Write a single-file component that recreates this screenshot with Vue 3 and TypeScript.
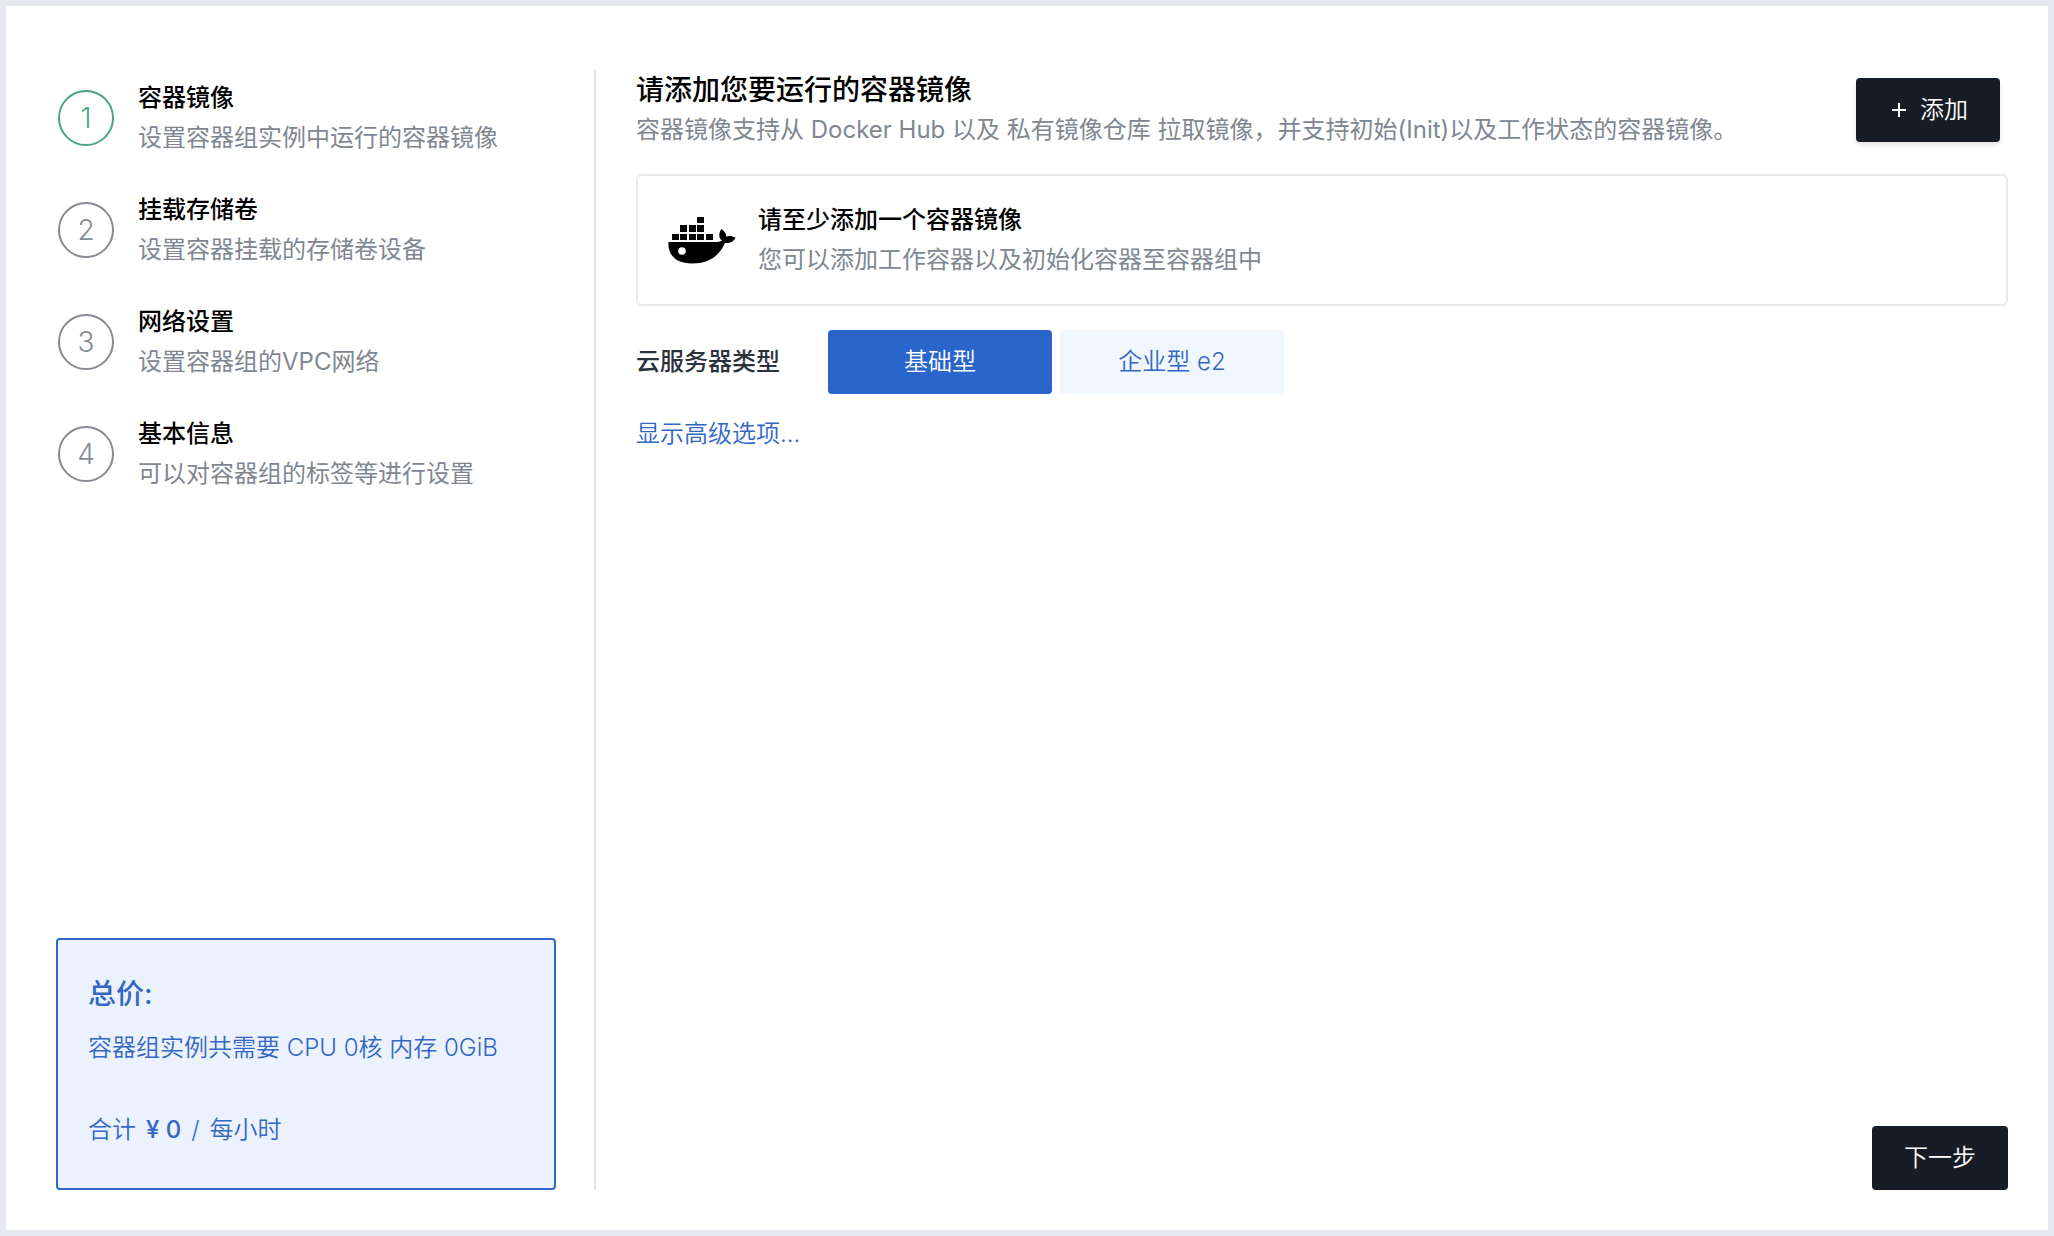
<script setup lang="ts">
import { ref } from 'vue'

interface Step {
  title: string
  desc: string
}

interface ServerType {
  value: string
  label: string
}

const steps: Step[] = [
  { title: '容器镜像', desc: '设置容器组实例中运行的容器镜像' },
  { title: '挂载存储卷', desc: '设置容器挂载的存储卷设备' },
  { title: '网络设置', desc: '设置容器组的VPC网络' },
  { title: '基本信息', desc: '可以对容器组的标签等进行设置' },
]
const current = ref(0)

const serverTypes: ServerType[] = [
  { value: 'basic', label: '基础型' },
  { value: 'e2', label: '企业型 e2' },
]
const serverType = ref('basic')
</script>

<template>
  <div class="page">
    <aside class="sidebar">
      <ol class="steps">
        <li v-for="(step, i) in steps" :key="step.title" class="step" :class="{ active: i === current }">
          <span class="num">{{ i + 1 }}</span>
          <div>
            <h3 class="title">{{ step.title }}</h3>
            <p class="desc">{{ step.desc }}</p>
          </div>
        </li>
      </ol>
      <section class="price">
        <h2 class="price-title">总价:</h2>
        <p>容器组实例共需要 CPU 0核 内存 0GiB</p>
        <p class="total">
          <span>合计</span>
          <strong>¥ 0</strong>
          <span>/</span>
          <span>每小时</span>
        </p>
      </section>
    </aside>

    <main class="main">
      <header class="header">
        <div>
          <h1 class="heading">请添加您要运行的容器镜像</h1>
          <p class="desc">容器镜像支持从 Docker Hub 以及 私有镜像仓库 拉取镜像，并支持初始(Init)以及工作状态的容器镜像。</p>
        </div>
        <button type="button" class="dark add">
          <svg width="14" height="14" viewBox="0 0 14 14" aria-hidden="true">
            <path d="M7 0v14M0 7h14" stroke="currentColor" stroke-width="2" />
          </svg>
          添加
        </button>
      </header>

      <section class="card">
        <svg class="docker" width="68" height="48" viewBox="0 0 68 48" aria-hidden="true">
          <g fill="#000">
            <path d="M29 1h7v6h-7zM12 9h7v7h-7zM21 9h7v7h-7zM29 9h7v7h-7zM4 18h7v6H4zM12 18h7v6h-7zM21 18h7v6h-7zM29 18h7v6h-7zM38 18h7v6h-7z" />
            <path
              fill-rule="evenodd"
              d="M0.500 26H48C51 26 53 25.400 54 24.500C50.500 22 50.500 16.500 53.500 13C57 15.500 58.300 18 58 20.500C61 19.500 64.500 20 67.500 21.500C66 25.500 62 27.500 57 27C51 41 39.500 47.500 24 47.500C8 47.500-0.500 39 0.500 26ZM14 31.200A3.800 3.800 0 1 0 14 38.800A3.800 3.800 0 1 0 14 31.200Z"
            />
          </g>
        </svg>
        <div>
          <h3 class="title">请至少添加一个容器镜像</h3>
          <p class="desc">您可以添加工作容器以及初始化容器至容器组中</p>
        </div>
      </section>

      <div class="field" role="radiogroup" aria-labelledby="server-type">
        <span id="server-type" class="field-label">云服务器类型</span>
        <div class="options">
          <label v-for="t in serverTypes" :key="t.value" class="option" :class="{ selected: t.value === serverType }">
            <input v-model="serverType" type="radio" name="server-type" :value="t.value" />
            {{ t.label }}
          </label>
        </div>
      </div>

      <a href="#" class="more" @click.prevent>显示高级选项...</a>

      <footer class="footer">
        <button type="button" class="dark next">下一步</button>
      </footer>
    </main>
  </div>
</template>

<style>
body {
  background: #e5e9ee;
}
</style>

<style scoped>
.page {
  box-sizing: border-box;
  display: flex;
  min-height: 100vh;
  padding: 64px 40px 40px 50px;
  border: 6px solid #e5e9ee;
  background: #fff;
  color: #000;
  font: 400 24px/40px Inter, "Noto Sans CJK SC", sans-serif;
}

h1,
h2,
h3,
p,
ol {
  margin: 0;
  padding: 0;
}

.sidebar {
  box-sizing: border-box;
  display: flex;
  flex: 0 0 540px;
  flex-direction: column;
  justify-content: space-between;
  padding-right: 38px;
  border-right: 2px solid #e5e8eb;
}

.steps {
  display: flex;
  flex-direction: column;
  gap: 32px;
  padding-top: 8px;
  list-style: none;
}

.step {
  display: flex;
  align-items: center;
  gap: 24px;
  padding-left: 2px;
}

.num {
  box-sizing: border-box;
  flex: none;
  width: 56px;
  height: 56px;
  border: 2px solid #868b93;
  border-radius: 50%;
  color: #868b93;
  font-size: 28px;
  font-weight: 300;
  line-height: 52px;
  text-align: center;
}

.active .num {
  border-color: #4ba582;
  color: #4ba582;
}

.title {
  font-size: 24px;
  font-weight: 500;
}

.desc {
  color: #808790;
}

.price {
  padding: 34px 30px 38px;
  border: 2px solid #3367c4;
  border-radius: 4px;
  background: #ebf2fe;
  color: #3367c4;
  font-weight: 350;
}

.price-title {
  margin-bottom: 14px;
  font-size: 28px;
  font-weight: 500;
}

.total {
  display: flex;
  gap: 10px;
  margin-top: 42px;
}

.total strong {
  font-weight: 500;
}

.main {
  display: flex;
  flex: 1;
  flex-direction: column;
  min-width: 0;
  padding-left: 40px;
}

.header {
  display: flex;
  align-items: center;
  justify-content: space-between;
  padding-right: 8px;
}

.heading {
  font-size: 28px;
  font-weight: 500;
}

.dark {
  height: 64px;
  border: 0;
  border-radius: 4px;
  background: #171d26;
  color: #fff;
  font: inherit;
  font-weight: 350;
}

.add {
  display: flex;
  align-items: center;
  flex: none;
  gap: 14px;
  padding: 0 32px 0 36px;
  box-shadow: 0 3px 5px rgba(23, 29, 38, 0.12);
}

.card {
  display: flex;
  align-items: center;
  gap: 22px;
  margin-top: 24px;
  padding: 24px 30px;
  border: 2px solid #e7e8ea;
  border-radius: 6px;
}

.docker {
  flex: none;
}

.field {
  display: flex;
  align-items: center;
  gap: 48px;
  margin-top: 24px;
}

.field-label {
  color: #2c323c;
  font-weight: 500;
}

.options {
  display: flex;
  gap: 8px;
}

.option {
  position: relative;
  width: 224px;
  border-radius: 4px;
  background: #f1f7fe;
  color: #3367c4;
  font-weight: 350;
  line-height: 64px;
  text-align: center;
}

.option.selected {
  background: #2a65cc;
  color: #fff;
}

.option input {
  position: absolute;
  inset: 0;
  margin: 0;
  opacity: 0;
}

.more {
  align-self: flex-start;
  margin-top: 20px;
  color: #3367c4;
  font-weight: 350;
  text-decoration: none;
}

.footer {
  display: flex;
  justify-content: flex-end;
  margin-top: auto;
}

.next {
  width: 136px;
}
</style>
